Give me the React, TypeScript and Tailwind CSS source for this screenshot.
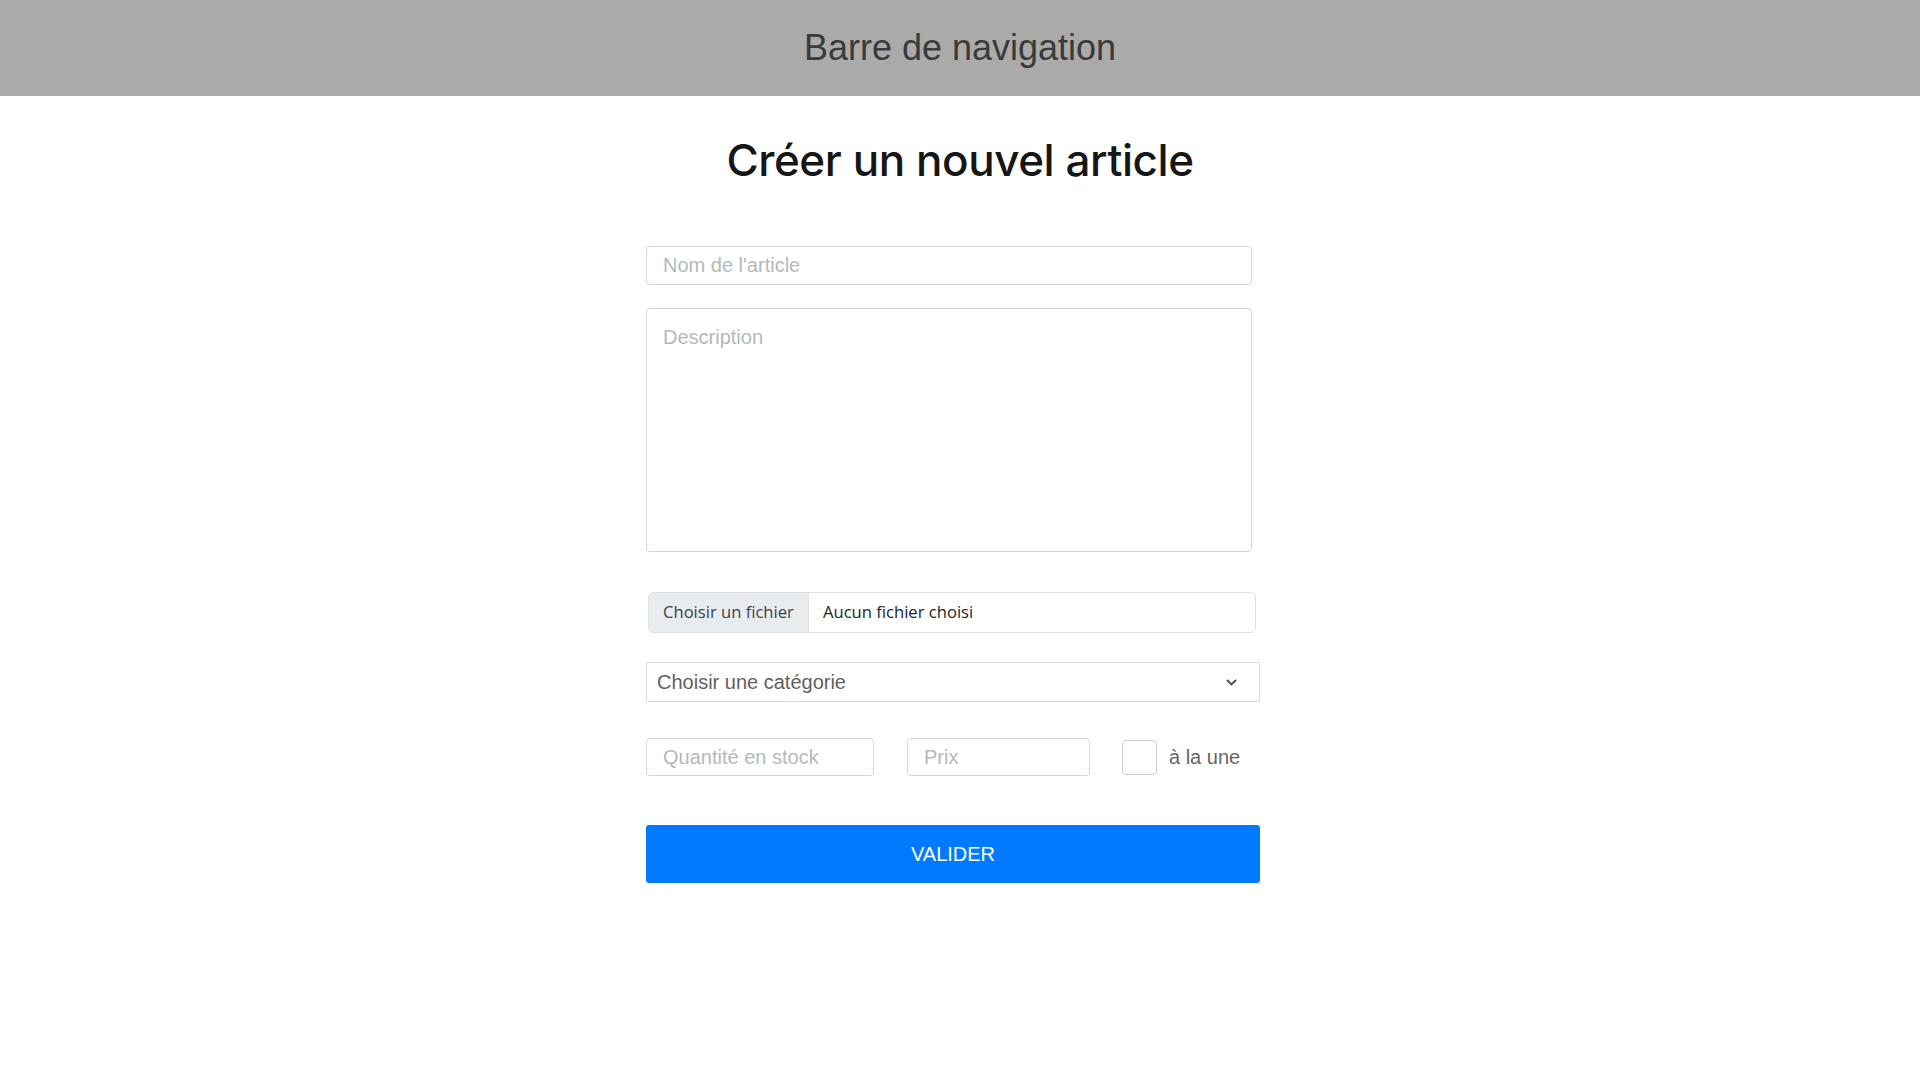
export default function App() {
  return (
    <div className="min-h-screen bg-white font-['Liberation_Sans',Arial,sans-serif]">
      <nav className="flex h-[96px] items-center justify-center bg-[#aaaaaa]">
        <span className="text-[36px] leading-none text-[#3a3a3a]">Barre de navigation</span>
      </nav>

      <main className="flex flex-col items-center">
        <h1 className="mt-[38px] font-['Inter',sans-serif] text-[44px] leading-[53px] font-medium tracking-[-0.01em] text-[#161616]">
          Créer un nouvel article
        </h1>

        <form className="mt-[59px] flex w-[628px] flex-col items-start" onSubmit={(e) => e.preventDefault()}>
          <input
            type="text"
            placeholder="Nom de l'article"
            className="h-[39px] w-[606px] rounded-[4px] border border-[#d4d6d8] px-4 text-[20px] text-[#333] outline-none placeholder:text-[#b3b9bd]"
          />

          <textarea
            placeholder="Description"
            className="mt-[23px] h-[244px] w-[606px] resize-none rounded-[4px] border border-[#d4d6d8] px-4 py-[13px] text-[20px] text-[#333] outline-none placeholder:text-[#b3b9bd]"
          />

          <label className="mt-[40px] ml-[2px] flex h-[41px] w-[608px] cursor-pointer overflow-hidden rounded-[5px] border border-[#dee2e6] font-['Open_Sans',sans-serif] text-[16.6px] text-[#212529]">
            <span className="flex w-[160px] items-center border-r border-[#dee2e6] bg-[#e9ecef] px-[14px] text-[#3d4246]">
              Choisir un fichier
            </span>
            <span className="flex items-center px-[14px]">Aucun fichier choisi</span>
          </label>

          <div className="mt-[29px] flex h-[40px] w-[614px] items-center justify-between border border-[#dcdcdc] pr-[22px] pl-[10px] text-[20px] text-[#5f5f5f]">
            <span>Choisir une catégorie</span>
            <svg width="11" height="7" viewBox="0 0 11 7" fill="none">
              <polyline points="1,1 5.5,5.5 10,1" stroke="#4a4a4a" strokeWidth="1.8" />
            </svg>
          </div>

          <div className="mt-[36px] flex items-center">
            <input
              type="text"
              placeholder="Quantité en stock"
              className="h-[38px] w-[228px] rounded-[4px] border border-[#d4d6d8] px-4 text-[20px] outline-none placeholder:text-[#b3b9bd]"
            />
            <input
              type="text"
              placeholder="Prix"
              className="ml-[33px] h-[38px] w-[183px] rounded-[4px] border border-[#d4d6d8] px-4 text-[20px] outline-none placeholder:text-[#b3b9bd]"
            />
            <span className="ml-[32px] h-[35px] w-[35px] rounded-[4px] border border-[#cfcfcf]" />
            <span className="ml-[12px] text-[20px] text-[#666666]">à la une</span>
          </div>

          <button
            type="submit"
            className="mt-[49px] h-[58px] w-[614px] rounded-[3px] bg-[#007bff] text-[20px] text-white"
          >
            VALIDER
          </button>
        </form>
      </main>
    </div>
  );
}
